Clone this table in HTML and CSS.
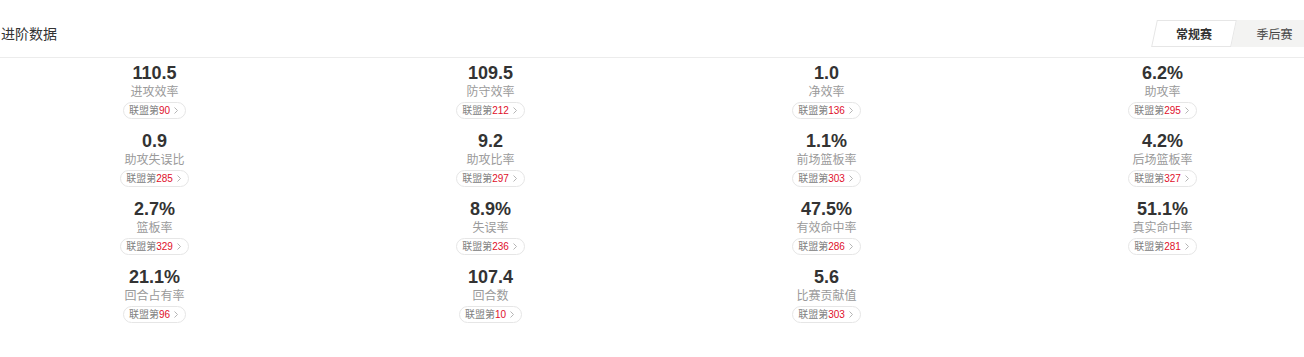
FILE: index.html
```html
<!DOCTYPE html>
<html lang="zh-CN">
<head>
<meta charset="utf-8">
<title>进阶数据</title>
<link rel="stylesheet" href="styles.css">
</head>
<body>
<div class="header">
  <div class="title">进阶数据</div>
  <div class="tabs">
    <div class="tab tab-active">常规赛</div>
    <div class="tab tab-other">季后赛</div>
  </div>
</div>
<div class="stats">
  <div class="stat"><div class="value">110.5</div><div class="label">进攻效率</div><div class="rank">联盟第<span class="num">90</span><svg class="chev" width="4" height="7" viewBox="0 0 4 7"><polyline points="0.5,0.5 3.5,3.5 0.5,6.5" fill="none" stroke="#b5b5b5" stroke-width="1"/></svg></div></div>
  <div class="stat"><div class="value">109.5</div><div class="label">防守效率</div><div class="rank">联盟第<span class="num">212</span><svg class="chev" width="4" height="7" viewBox="0 0 4 7"><polyline points="0.5,0.5 3.5,3.5 0.5,6.5" fill="none" stroke="#b5b5b5" stroke-width="1"/></svg></div></div>
  <div class="stat"><div class="value">1.0</div><div class="label">净效率</div><div class="rank">联盟第<span class="num">136</span><svg class="chev" width="4" height="7" viewBox="0 0 4 7"><polyline points="0.5,0.5 3.5,3.5 0.5,6.5" fill="none" stroke="#b5b5b5" stroke-width="1"/></svg></div></div>
  <div class="stat"><div class="value">6.2%</div><div class="label">助攻率</div><div class="rank">联盟第<span class="num">295</span><svg class="chev" width="4" height="7" viewBox="0 0 4 7"><polyline points="0.5,0.5 3.5,3.5 0.5,6.5" fill="none" stroke="#b5b5b5" stroke-width="1"/></svg></div></div>

  <div class="stat"><div class="value">0.9</div><div class="label">助攻失误比</div><div class="rank">联盟第<span class="num">285</span><svg class="chev" width="4" height="7" viewBox="0 0 4 7"><polyline points="0.5,0.5 3.5,3.5 0.5,6.5" fill="none" stroke="#b5b5b5" stroke-width="1"/></svg></div></div>
  <div class="stat"><div class="value">9.2</div><div class="label">助攻比率</div><div class="rank">联盟第<span class="num">297</span><svg class="chev" width="4" height="7" viewBox="0 0 4 7"><polyline points="0.5,0.5 3.5,3.5 0.5,6.5" fill="none" stroke="#b5b5b5" stroke-width="1"/></svg></div></div>
  <div class="stat"><div class="value">1.1%</div><div class="label">前场篮板率</div><div class="rank">联盟第<span class="num">303</span><svg class="chev" width="4" height="7" viewBox="0 0 4 7"><polyline points="0.5,0.5 3.5,3.5 0.5,6.5" fill="none" stroke="#b5b5b5" stroke-width="1"/></svg></div></div>
  <div class="stat"><div class="value">4.2%</div><div class="label">后场篮板率</div><div class="rank">联盟第<span class="num">327</span><svg class="chev" width="4" height="7" viewBox="0 0 4 7"><polyline points="0.5,0.5 3.5,3.5 0.5,6.5" fill="none" stroke="#b5b5b5" stroke-width="1"/></svg></div></div>

  <div class="stat"><div class="value">2.7%</div><div class="label">篮板率</div><div class="rank">联盟第<span class="num">329</span><svg class="chev" width="4" height="7" viewBox="0 0 4 7"><polyline points="0.5,0.5 3.5,3.5 0.5,6.5" fill="none" stroke="#b5b5b5" stroke-width="1"/></svg></div></div>
  <div class="stat"><div class="value">8.9%</div><div class="label">失误率</div><div class="rank">联盟第<span class="num">236</span><svg class="chev" width="4" height="7" viewBox="0 0 4 7"><polyline points="0.5,0.5 3.5,3.5 0.5,6.5" fill="none" stroke="#b5b5b5" stroke-width="1"/></svg></div></div>
  <div class="stat"><div class="value">47.5%</div><div class="label">有效命中率</div><div class="rank">联盟第<span class="num">286</span><svg class="chev" width="4" height="7" viewBox="0 0 4 7"><polyline points="0.5,0.5 3.5,3.5 0.5,6.5" fill="none" stroke="#b5b5b5" stroke-width="1"/></svg></div></div>
  <div class="stat"><div class="value">51.1%</div><div class="label">真实命中率</div><div class="rank">联盟第<span class="num">281</span><svg class="chev" width="4" height="7" viewBox="0 0 4 7"><polyline points="0.5,0.5 3.5,3.5 0.5,6.5" fill="none" stroke="#b5b5b5" stroke-width="1"/></svg></div></div>

  <div class="stat"><div class="value">21.1%</div><div class="label">回合占有率</div><div class="rank">联盟第<span class="num">96</span><svg class="chev" width="4" height="7" viewBox="0 0 4 7"><polyline points="0.5,0.5 3.5,3.5 0.5,6.5" fill="none" stroke="#b5b5b5" stroke-width="1"/></svg></div></div>
  <div class="stat"><div class="value">107.4</div><div class="label">回合数</div><div class="rank">联盟第<span class="num">10</span><svg class="chev" width="4" height="7" viewBox="0 0 4 7"><polyline points="0.5,0.5 3.5,3.5 0.5,6.5" fill="none" stroke="#b5b5b5" stroke-width="1"/></svg></div></div>
  <div class="stat"><div class="value">5.6</div><div class="label">比赛贡献值</div><div class="rank">联盟第<span class="num">303</span><svg class="chev" width="4" height="7" viewBox="0 0 4 7"><polyline points="0.5,0.5 3.5,3.5 0.5,6.5" fill="none" stroke="#b5b5b5" stroke-width="1"/></svg></div></div>
</div>
</body>
</html>
```

FILE: styles.css
```css
html, body {
  margin: 0;
  padding: 0;
  background: #fff;
}
body {
  font-family: "Liberation Sans", "Noto Sans CJK SC", sans-serif;
  color: #333;
  overflow: hidden;
}
.header {
  display: flex;
  align-items: center;
  justify-content: space-between;
  padding: 20px 0 10px;
  border-bottom: 1px solid #ececec;
}
.title {
  font-size: 14px;
  line-height: 20px;
  color: #333;
  padding-left: 1px;
}
.tabs {
  display: flex;
  height: 27px;
}
.tab {
  display: flex;
  align-items: center;
  justify-content: center;
  font-size: 12px;
  color: #333;
  box-sizing: border-box;
}
.tab-active {
  position: relative;
  z-index: 1;
  width: 80px;
  font-weight: bold;
}
.tab-active::before {
  content: "";
  position: absolute;
  top: 0;
  left: 0;
  right: 0;
  bottom: 0;
  background: #fff;
  border: 1px solid #e6e6e6;
  transform: skewX(-12deg);
  z-index: -1;
}
.tab-other {
  width: 80px;
  margin-left: -10px;
  padding-left: 21px;
  background: #f3f3f2;
  color: #444;
}
.stats {
  display: grid;
  grid-template-columns: repeat(4, 309px);
  column-gap: 27px;
  row-gap: 12px;
  padding-top: 5px;
  overflow: hidden;
}
.stat {
  display: flex;
  flex-direction: column;
  align-items: center;
}
.value {
  font-size: 18px;
  line-height: 20px;
  font-weight: bold;
  color: #333;
}
.label {
  margin-top: 1px;
  font-size: 12px;
  line-height: 16px;
  color: #9a9a9a;
}
.rank {
  margin-top: 2px;
  display: flex;
  align-items: center;
  height: 15px;
  padding: 0 7px 0 5px;
  border: 1px solid #e6e6e6;
  border-radius: 9px;
  font-size: 10px;
  line-height: 15px;
  color: #808080;
}
.num {
  color: #e0102b;
}
.chev {
  margin-left: 4px;
}
```
